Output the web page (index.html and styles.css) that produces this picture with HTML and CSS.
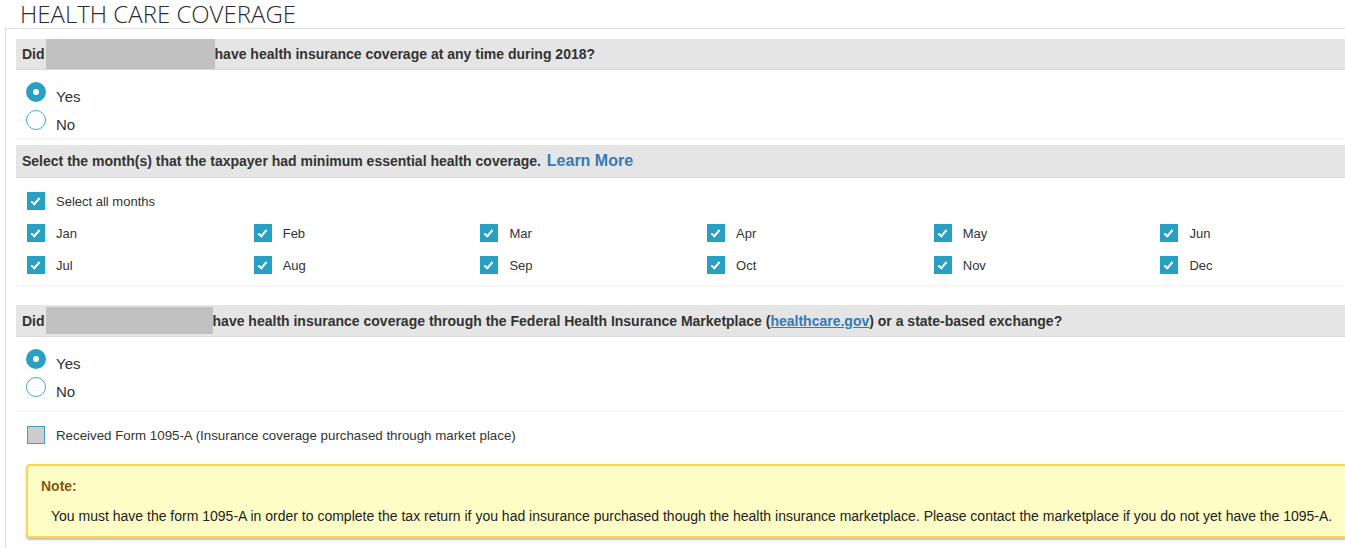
FILE: index.html
```html
<!DOCTYPE html>
<html lang="en">
<head>
    <meta charset="UTF-8">
    <title>Health Care Coverage</title>
    <link rel="stylesheet" href="styles.css">
</head>
<body>
    <h1 class="page-title">HEALTH CARE COVERAGE</h1>
    <div class="panel">
        <div class="card card-q1">
            <div class="q-head">Did<span class="redact"></span>have health insurance coverage at any time during 2018?</div>
            <div class="q-body">
                <label class="opt"><span class="radio checked"></span><span class="opt-text">Yes</span></label>
                <label class="opt"><span class="radio"></span><span class="opt-text">No</span></label>
            </div>
        </div>

        <div class="card card-months">
            <div class="q-head months-head">Select the month(s) that the taxpayer had minimum essential health coverage. <a class="learn" href="#">Learn More</a></div>
            <div class="q-body">
                <label class="chk-row"><span class="chk on"></span>Select all months</label>
                <div class="months">
                    <label class="chk-row"><span class="chk on"></span>Jan</label>
                    <label class="chk-row"><span class="chk on"></span>Feb</label>
                    <label class="chk-row"><span class="chk on"></span>Mar</label>
                    <label class="chk-row"><span class="chk on"></span>Apr</label>
                    <label class="chk-row"><span class="chk on"></span>May</label>
                    <label class="chk-row"><span class="chk on"></span>Jun</label>
                    <label class="chk-row"><span class="chk on"></span>Jul</label>
                    <label class="chk-row"><span class="chk on"></span>Aug</label>
                    <label class="chk-row"><span class="chk on"></span>Sep</label>
                    <label class="chk-row"><span class="chk on"></span>Oct</label>
                    <label class="chk-row"><span class="chk on"></span>Nov</label>
                    <label class="chk-row"><span class="chk on"></span>Dec</label>
                </div>
            </div>
        </div>

        <div class="card card-q3">
            <div class="q-head q3-head">Did<span class="redact"></span>have health insurance coverage through the Federal Health Insurance Marketplace (<a class="hc-link" href="#">healthcare.gov</a>) or a state-based exchange?</div>
            <div class="q-body">
                <label class="opt"><span class="radio checked"></span><span class="opt-text">Yes</span></label>
                <label class="opt"><span class="radio"></span><span class="opt-text">No</span></label>
            </div>
        </div>

        <div class="card card-form">
            <label class="chk-row form-row"><span class="chk"></span>Received Form 1095-A (Insurance coverage purchased through market place)</label>
            <div class="note">
                <div class="note-title">Note:</div>
                <div class="note-text">You must have the form 1095-A in order to complete the tax return if you had insurance purchased though the health insurance marketplace. Please contact the marketplace if you do not yet have the 1095-A.</div>
            </div>
        </div>
    </div>
</body>
</html>
```

FILE: styles.css
```css
body {
    margin: 0;
    overflow: hidden;
    font-family: "Liberation Sans", Arial, sans-serif;
    color: #333;
    background: #fff;
}
.page-title {
    margin: 0;
    height: 28px;
    padding-left: 20px;
    font-family: "Open Sans", "Liberation Sans", sans-serif;
    font-weight: 300;
    font-size: 24px;
    line-height: 27px;
    color: #2b2b2b;
    white-space: nowrap;
}
.panel {
    margin-left: 5px;
    width: 1440px;
    border-top: 1px solid #ddd;
    border-left: 1px solid #ddd;
    padding: 10px 0 0 10px;
    min-height: 520px;
}
.card {
    background: #fff;
    box-shadow: 0 1px 2px rgba(0, 0, 0, 0.07);
}
.q-head {
    display: flex;
    align-items: center;
    height: 30px;
    padding-left: 6px;
    background: #e5e5e5;
    border-bottom: 1px solid #d8d8d8;
    font-size: 14px;
    font-weight: bold;
    color: #333;
    white-space: pre;
}
.redact {
    display: block;
    align-self: stretch;
    width: 169px;
    margin-left: 1px;
    background: #c1c1c1;
}
.q-body {
    padding: 8px 0 4px 10px;
}
.opt {
    display: flex;
    align-items: center;
    height: 28px;
    font-size: 15px;
    color: #333;
}
.opt-text {
    padding-top: 8px;
}
.radio {
    box-sizing: border-box;
    width: 20px;
    height: 20px;
    margin-right: 10px;
    border: 1.5px solid #45acc9;
    border-radius: 50%;
    background: #fff;
    display: flex;
    align-items: center;
    justify-content: center;
}
.radio.checked {
    border: none;
    background: #2aa0c3;
}
.radio.checked::after {
    content: "";
    width: 6px;
    height: 6px;
    border-radius: 50%;
    background: #fff;
}
.card-months {
    margin-top: 7px;
}
.months-head {
    height: 32px;
}
.learn {
    color: #337ab7;
    font-size: 16px;
    text-decoration: none;
    margin-left: 2px;
}
.card-months .q-body {
    padding: 7px 0 4px 11px;
}
.chk-row {
    display: flex;
    align-items: center;
    height: 32px;
    font-size: 13px;
    color: #333;
}
.chk {
    position: relative;
    box-sizing: border-box;
    flex: none;
    width: 18px;
    height: 18px;
    margin-right: 11px;
    background: #ccc;
    border: 1px solid #3a9fc1;
}
.chk.on {
    background: #28a0c4;
    border: none;
}
.chk.on::after {
    content: "";
    position: absolute;
    left: 6px;
    top: 4px;
    width: 3px;
    height: 7px;
    border-right: 2px solid #fff;
    border-bottom: 2px solid #fff;
    transform: rotate(40deg);
}
.months {
    display: grid;
    grid-template-columns: repeat(6, 226.7px);
}
.card-q3 {
    margin-top: 20px;
}
.q3-head {
    height: 31px;
}
.q3-head .redact {
    width: 167px;
    margin: 2px 0 2px 1px;
}
.hc-link {
    color: #337ab7;
    text-decoration: underline;
}
.card-q3 .q-body {
    padding: 8px 0 10px 10px;
}
.card-q3 .opt-text {
    padding-top: 9px;
}
.card-form {
    margin-top: 1px;
    padding: 8px 0 20px 11px;
    box-shadow: none;
}
.form-row {
    height: 30px;
    font-size: 13.3px;
}
.note {
    margin-top: 14px;
    margin-left: -1px;
    background: #fffdc6;
    border: 2px solid #fbd74f;
    border-radius: 4px;
    box-shadow: 0 2px 2px rgba(0, 0, 0, 0.25);
    padding: 12px 0 12px 13px;
    font-size: 14px;
}
.note-title {
    font-weight: bold;
    color: #85580f;
    line-height: 16px;
}
.note-text {
    margin-top: 14px;
    padding-left: 10px;
    line-height: 16px;
    color: #222;
    white-space: nowrap;
}
```
